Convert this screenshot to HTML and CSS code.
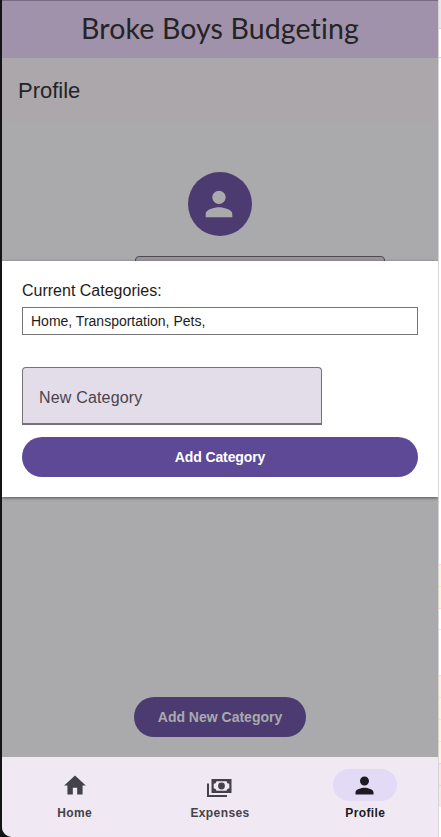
FILE: index.html
```html
<!DOCTYPE html>
<html lang="en">
<head>
<meta charset="utf-8">
<title>Broke Boys Budgeting</title>
<link rel="stylesheet" href="styles.css">
</head>
<body>
<div class="frame">
  <div class="app">
    <header class="topbar"><h1>Broke Boys Budgeting</h1></header>
    <div class="subbar"><h2>Profile</h2></div>
    <main class="content">
      <div class="avatar"><svg viewBox="0 0 24 24" width="40" height="40"><path d="M12 12c2.21 0 4-1.79 4-4s-1.79-4-4-4-4 1.79-4 4 1.79 4 4 4zm0 2c-2.67 0-8 1.34-8 4v2h16v-2c0-2.66-5.33-4-8-4z"/></svg></div>
      <div class="profile-field"></div>
      <button class="btn btn-dim">Add New Category</button>
    </main>
    <nav class="nav">
      <a class="nav-item"><span class="pill"><svg viewBox="0 0 24 24" width="26" height="27" preserveAspectRatio="none"><path d="M10 20v-6h4v6h5v-8h3L12 3 2 12h3v8z"/></svg></span><span>Home</span></a>
      <a class="nav-item expenses"><span class="pill"><svg viewBox="0 0 25 18" width="25" height="18"><path fill-rule="evenodd" d="M4.500 0h20v14h-20zM9.500 2.200a3 3 0 0 1-2.800 2.600v4.400a3 3 0 0 1 2.800 2.600h10a3 3 0 0 1 2.800-2.600V4.800a3 3 0 0 1-2.800-2.600z"/><circle cx="14.500" cy="7" r="3.400"/><path d="M0 4.500h2v11.500h18v2H0z"/></svg></span><span>Expenses</span></a>
      <a class="nav-item active"><span class="pill"><svg viewBox="0 0 24 24" width="27" height="27"><path d="M12 12c2.210 0 4-1.790 4-4s-1.790-4-4-4-4 1.790-4 4 1.790 4 4 4zm0 2c-2.670 0-8 1.340-8 4v2h16v-2c0-2.660-5.330-4-8-4z"/></svg></span><span>Profile</span></a>
    </nav>
    <section class="dialog">
      <label class="label">Current Categories:</label>
      <div class="categories">Home, Transportation, Pets,</div>
      <div class="field">New Category</div>
      <button class="btn">Add Category</button>
    </section>
  </div>
  <div class="edge"><i class="gray"></i><i class="white"></i><i class="gap"></i><i class="yellow"></i><i class="yellow last"></i><i class="blank"></i><i class="rest"></i><i class="yellow"></i><i class="yellow"></i><i class="yellow"></i><i class="yellow"></i><i class="pink"></i><i class="pink"></i></div>
</div>
</body>
</html>
```
FILE: styles.css
```css
* { box-sizing: border-box; }
body { margin: 0; background: #141316; font-family: "Liberation Sans", Arial, sans-serif; color: #1d1b20; overflow: hidden; }
h1, h2 { margin: 0; font-weight: 400; }
.frame { display: flex; height: 837px; padding-left: 2px; }
.app { position: relative; width: 436px; display: flex; flex-direction: column; background: #aaaaac; border-bottom-left-radius: 10px; overflow: hidden; }
.topbar { height: 58px; border-top: 1px solid #786a82; background: #a092aa; display: flex; align-items: center; justify-content: center; padding-bottom: 4px; }
.topbar h1 { font: 400 28.5px/40px Lato, sans-serif; letter-spacing: .12px; color: #242326; white-space: nowrap; }
.subbar { height: 64px; background: #aca7ab; padding: 2px 16px 0; display: flex; align-items: center; }
.subbar h2 { font-size: 22px; line-height: 28px; color: #242427; }
.content { flex: 1; display: flex; flex-direction: column; align-items: center; padding: 50px 0 20px; }
.avatar { width: 64px; height: 64px; border-radius: 50%; background: #4b3b70; display: flex; align-items: center; justify-content: center; padding-right: 2px; padding-bottom: 1px; }
.avatar svg { fill: #aaaaac; }
.profile-field { width: 250px; height: 58px; margin: 20px 0 0 80px; border: 1px solid #4c4a50; border-radius: 4px 4px 0 0; background: #99939e; }
.btn { width: 100%; height: 40px; flex-shrink: 0; border: 0; padding: 0; border-radius: 20px; background: #5d4996; color: #fff; font: bold 14px "Liberation Sans", Arial, sans-serif; letter-spacing: -.12px; }
.btn-dim { width: 172px; margin-top: auto; background: #4b3b70; color: #aaaaac; letter-spacing: 0; }
.nav { height: 80px; background: #f0e9f4; display: flex; padding-top: 12px; }
.nav-item { flex: 1; display: flex; flex-direction: column; align-items: center; gap: 4px; font-size: 12px; line-height: 16px; font-weight: bold; letter-spacing: .4px; color: #45414a; }
.pill { width: 64px; height: 32px; border-radius: 16px; display: flex; align-items: center; justify-content: center; }
.pill svg { fill: #45414a; }
.expenses .pill { padding-top: 6px; }
.active { color: #1c1a20; }
.active .pill { background: #e3daf5; padding-right: 1px; }
.active .pill svg { fill: #1d1a26; }
.dialog { position: absolute; left: 0; top: 261px; width: 436px; height: 236px; padding: 20px; background: #fff; box-shadow: 0 1px 3px rgba(0,0,0,.5); display: flex; flex-direction: column; }
.label { font-size: 16px; line-height: 20px; }
.categories { height: 28px; margin-top: 6px; border: 1px solid #767578; padding: 0 8px; font-size: 14px; line-height: 26px; }
.field { width: 300px; height: 58px; margin: 32px 0 12px; border: 1px solid #757378; border-bottom: 2px solid #757179; border-radius: 4px 4px 0 0; background: #e3dde9; padding: 0 16px; font-size: 16px; line-height: 59px; letter-spacing: .18px; color: #48444e; }
.edge { width: 3px; border-left: 1px solid #d5d5d6; background: #fff; display: flex; flex-direction: column; }
.edge i { display: block; height: 22px; flex-shrink: 0; }
.edge .gray { height: 29px; background: #e8e8e8; border-bottom: 1px solid #d2d2d2; }
.edge .white { height: 29px; border-bottom: 1px solid #d2d2d2; }
.edge .gap { height: 506px; }
.edge .yellow { background: #fef5d8; border-top: 1px solid #f9e4b4; }
.edge .last { height: 23px; border-bottom: 1px solid #f9e4b4; }
.edge .blank { height: 21px; border-bottom: 1px solid #e8e8e8; }
.edge .rest { height: 45px; }
.edge .pink { background: #fce6e6; border-top: 1px solid #f4cfd1; }
```
